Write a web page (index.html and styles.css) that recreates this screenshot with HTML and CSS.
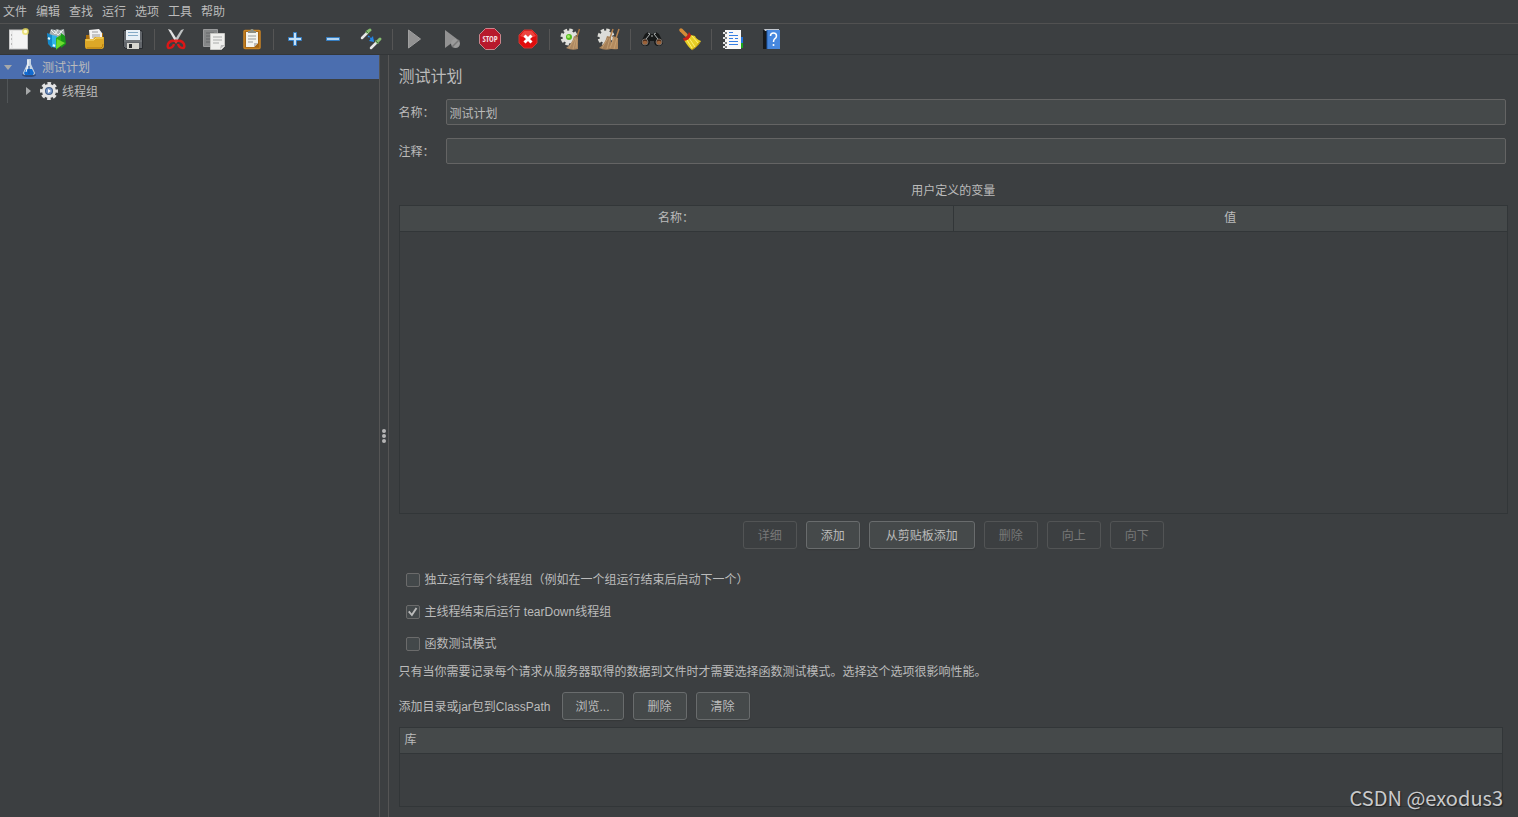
FILE: index.html
```html
<!DOCTYPE html>
<html lang="zh-CN">
<head>
<meta charset="utf-8">
<title>测试计划</title>
<link rel="stylesheet" href="styles.css">
</head>
<body>
<div class="app">
  <nav class="menubar" aria-label="主菜单">
    <button type="button">文件</button>
    <button type="button">编辑</button>
    <button type="button">查找</button>
    <button type="button">运行</button>
    <button type="button">选项</button>
    <button type="button">工具</button>
    <button type="button">帮助</button>
  </nav>

  <div class="toolbar" role="toolbar" aria-label="工具栏">
    <button type="button" aria-label="新建"><svg viewBox="0 0 24 24"><rect x="2.500" y="3" width="18" height="19" fill="#f4f4f4" stroke="#c9c9c9"/><path d="M5 3v19" stroke="#e2e2e2"/><path d="M4 8h1M4 12h1M4 17h1" stroke="#888"/><circle cx="18.500" cy="4.500" r="3.500" fill="#e9dc55" opacity=".75"/><circle cx="18.500" cy="4.500" r="1.700" fill="#fffbd8"/></svg></button>
    <button type="button" aria-label="模板"><svg viewBox="0 0 24 24"><path d="M4 8l2-6 4 1 2-1 3 1 4-1 1 8-8 4z" fill="#a9b1b3"/><path d="M6 3l4 4 3-4M9 3l4 5 5-5M15 4l3 4" stroke="#eef1f1" fill="none"/><path d="M2 6l5 2v13l-4-4z" fill="#1689c9"/><path d="M7 8l5 1v12l-5-1z" fill="#2fb4ea"/><path d="M3 11l2 1M8 18l2 1" stroke="#e5faff" stroke-width="2"/><path d="M11 11l5-3v11l-5 4z" fill="#2fae18"/><path d="M16 6l4 3 1 8-5 4z" fill="#189a18"/><path d="M12 12l8 4-9 6z" fill="#6ddb2e"/></svg></button>
    <button type="button" aria-label="打开"><svg viewBox="0 0 24 24"><path d="M3 8h3l1-2h13v15H3z" fill="#aa6e0c"/><path d="M6 3l10-1 3 4v8H7z" fill="#f3f3f3"/><path d="M9 5h6M9 8h8M9 10h8" stroke="#999"/><path d="M2 12h8l2-2h9v9q0 3-3 3H4q-2 0-2-3z" fill="#dda827"/><path d="M3 13h8l2-2h7" stroke="#f9db71" fill="none"/><path d="M4 21h14q2-1 2-4" stroke="#b47b0e" fill="none"/></svg></button>
    <button type="button" aria-label="保存"><svg viewBox="0 0 24 24"><path d="M2.500 3.500h18l1 2v16h-17l-2-2z" fill="#62666b" stroke="#292c30"/><rect x="5" y="3" width="14" height="10" fill="#e8f0f6"/><path d="M7 5.500h10M7 8.500h10" stroke="#86abc6"/><rect x="6" y="16" width="12" height="6" fill="#d6d6d0"/><rect x="8" y="17" width="3" height="4" fill="#292b2e"/><path d="M3 14h18" stroke="#7e8387"/></svg></button>
    <span class="separator"></span>
    <button type="button" aria-label="剪切"><svg viewBox="0 0 24 24"><path d="M4 2l3 1 7 11-2 2z" fill="#e3e3e3"/><path d="M20 2l-3 1-7 11 2 2z" fill="#bfc3c4"/><path d="M11 14q-5-1-7 3-1 4 1 4 4 0 5-4M13 14q5-1 7 3 1 4-1 4-4 0-5-4" fill="none" stroke="#db1717" stroke-width="2.400"/><path d="M10 14l2-2 2 2-2 3z" fill="#e22a24"/></svg></button>
    <button type="button" aria-label="复制"><svg viewBox="0 0 24 24"><path d="M1.500 2.500h14v17h-14z" fill="#858788" stroke="#9a9b9c"/><path d="M4 6h8M4 9h8M4 12h5M4 15h5" stroke="#656768"/><path d="M8.500 6.500h14v13l-3 3h-11z" fill="#efefed" stroke="#c7c7c4"/><path d="M11 10h9M11 13h9M11 16h6" stroke="#a9abaa"/><path d="M18 22l1-4h4z" fill="#bbb"/></svg></button>
    <button type="button" aria-label="粘贴"><svg viewBox="0 0 24 24"><rect x="4" y="3.500" width="16" height="18" rx="1" fill="#a66512" stroke="#c98424" stroke-width="1.500"/><path d="M6 5h12v11l-4 4H6z" fill="#f3f3ee"/><path d="M8 9h8M8 12h8M8 15h5" stroke="#999c9b"/><path d="M14 20v-4h4" fill="#bbb"/><path d="M8 6V4h2l1-2h2l1 2h2v2z" fill="#8b8e83"/></svg></button>
    <span class="separator"></span>
    <button type="button" aria-label="展开"><svg viewBox="0 0 24 24"><path d="M10.500 5.500h3v5h5v3h-5v5h-3v-5h-5v-3h5z" fill="#c5e0f7" stroke="#347dc1"/></svg></button>
    <button type="button" aria-label="折叠"><svg viewBox="0 0 24 24"><path d="M5.500 10.500h13v3h-13z" fill="#b3d5f3" stroke="#347dc1"/></svg></button>
    <button type="button" aria-label="切换"><svg viewBox="0 0 24 24"><path d="M3 11l6-6" stroke="#e8e8e8" stroke-width="2.500" stroke-linecap="round"/><path d="M8 5l3-2" stroke="#86bd70" stroke-width="3" stroke-linecap="round"/><path d="M7 4l3 3" stroke="#497a42"/><path d="M12 21l6-6" stroke="#e8e8e8" stroke-width="2.500" stroke-linecap="round"/><path d="M18 15l3-3" stroke="#86bd70" stroke-width="3" stroke-linecap="round"/><path d="M16 13l4 4" stroke="#497a42"/><path d="M9 9l5 4" stroke="#2686e8" stroke-width="1.500" stroke-dasharray="2 1"/><path d="M10 14l5 1-1-6z" fill="#2686e8"/></svg></button>
    <span class="separator"></span>
    <button type="button" aria-label="启动"><svg viewBox="0 0 24 24"><path d="M6.500 3v18l12-9z" fill="#929292" stroke="#a0a0a0"/></svg></button>
    <button type="button" aria-label="无停顿启动"><svg viewBox="0 0 24 24"><path d="M5 3v18l12-9z" fill="#929292"/><circle cx="15.500" cy="16.500" r="4.500" fill="#9b9b9b"/><path d="M12 20l7-7" stroke="#777" stroke-width="1.500"/></svg></button>
    <button type="button" aria-label="停止"><svg viewBox="0 0 24 24"><path d="M7.500 1.500h9l6 6v9l-6 6h-9l-6-6v-9z" fill="#b7192c" stroke="#c9868d"/><text class="stop-text" x="12" y="15" text-anchor="middle">STOP</text></svg></button>
    <button type="button" aria-label="关闭"><svg viewBox="0 0 24 24"><path d="M8 3h8l5 5v8l-5 5H8l-5-5V8z" fill="#e00d0d" stroke="#c93a34"/><path d="M4 9l4-5h8l4 5q-8 4-16 0" fill="#f87368" opacity=".55"/><path d="M8.500 8.500l7 7M15.500 8.500l-7 7" stroke="#fff" stroke-width="3"/></svg></button>
    <span class="separator"></span>
    <button type="button" aria-label="清除"><svg viewBox="0 0 24 24"><circle cx="10" cy="10" r="7" fill="none" stroke="#deded9" stroke-width="3" stroke-dasharray="3.500 2"/><circle cx="10" cy="10" r="6.500" fill="#e2e2de"/><circle cx="10" cy="10" r="3" fill="#55bb21"/><circle cx="9.500" cy="9.500" r="1.500" fill="#a5ef6a"/><path d="M20.500 2l-3 9" stroke="#a87542" stroke-width="1.500"/><path d="M15 9l4 1v12q-6 2-12-1 6-4 8-12z" fill="#ad8861"/><path d="M16 11l-6 10M17 11l-3 11M18 12l-1 9" stroke="#cba77a" stroke-width=".7"/></svg></button>
    <button type="button" aria-label="清除全部"><svg viewBox="0 0 24 24"><circle cx="9" cy="10" r="7" fill="none" stroke="#deded9" stroke-width="3" stroke-dasharray="3.500 2"/><circle cx="9" cy="10" r="6.500" fill="#dcdcd8"/><path d="M16 2l-3 9M22 2l-3 9" stroke="#b5824f" stroke-width="1.500"/><path d="M10 9l4 1v12q-6 2-12-1 6-4 8-12z" fill="#a68058"/><path d="M16 9l5 2v11q-5 1-10-1 4-4 5-12z" fill="#b28a5e"/><path d="M11 11L5 21M13 11l-3 11M17 11l-4 10M20 11l-3 11" stroke="#cba77a" stroke-width=".7"/></svg></button>
    <span class="separator"></span>
    <button type="button" aria-label="查找"><svg viewBox="0 0 24 24"><path d="M5 7l3-2 3 2h2l3-2 3 2 4 8q0 4-5 4-4 0-4-5h-4q0 5-4 5-5 0-5-4z" fill="#171919"/><path d="M8 6l2 1-4 5M16 6l-2 1 4 5M11 9h2" fill="none" stroke="#aeb2b2"/><circle cx="5" cy="15" r="3" fill="#9a6138" stroke="#6f6a66"/><circle cx="19" cy="15" r="3" fill="#9a6138" stroke="#6f6a66"/><path d="M3 14q2-2 4 0M17 14q2-2 4 0" fill="none" stroke="#382014"/></svg></button>
    <button type="button" aria-label="重置查找"><svg viewBox="0 0 24 24"><path d="M3 3l5 5" stroke="#d48b38" stroke-width="3.500" stroke-linecap="round"/><path d="M6 13l7-5 4 1q1 3 6 5-3 6-9 9-4-3-8-10z" fill="#e8ce24"/><path d="M9 13l5 8M11 11l6 9M14 9l6 7" stroke="#fff176"/><path d="M5 11q4 0 6-6l2 3q-1 5-7 6z" fill="#ca2018"/><path d="M14 23q5-3 8-8" fill="none" stroke="#ac8610"/></svg></button>
    <span class="separator"></span>
    <button type="button" aria-label="函数助手"><svg viewBox="0 0 24 24"><path d="M19 10h3v6h-3z" fill="#2174df"/><path d="M19 16h3v5h-3z" fill="#19a51c"/><rect x="4" y="3" width="16" height="19" fill="#f8f8f8"/><path d="M8 5.500h4M8 8.500h9M8 11.500h4M14 11.500h3M8 14.500h9M8 17.500h9" stroke="#347de2"/><path d="M2 6h4M2 11h4M2 16h4M2 20h4" stroke="#dfe0e0" stroke-width="2"/><path d="M5 5v2M5 10v2M5 15v2M5 19v2" stroke="#202224"/></svg></button>
    <button type="button" aria-label="帮助"><svg viewBox="0 0 24 24"><path d="M4 3h4v19H4z" fill="#17191b"/><path d="M5 2h15v2H6z" fill="#c3c8cf"/><path d="M8 3h13v19H8z" fill="#4788df"/><path d="M8 3v19" stroke="#205aaa"/><path d="M11.500 9q0-3 3-3t3 3q0 2-2 3-1 1-1 3" fill="none" stroke="#fff" stroke-width="1.500"/><circle cx="14.500" cy="18" r="1" fill="#fff"/></svg></button>
  </div>

  <div class="workspace">
    <aside class="tree">
      <div class="tree-row selected">
        <svg class="arrow" viewBox="0 0 12 12"><path d="M2 4h8L6 9z"/></svg>
        <svg class="node-icon" viewBox="0 0 20 20"><ellipse cx="10" cy="18" rx="7" ry="2" fill="#304b7e"/><path d="M8 2h4v5l4 9q0 2-2 2H6q-2 0-2-2l4-9z" fill="#c5d3e2"/><path d="M7 12h6l2 4-1 2H6l-1-2z" fill="#126bd0"/><path d="M9 3v5l-2 7" stroke="#fff" fill="none"/><path d="M10 9v8" stroke="#1c4f9e"/></svg>
        <span>测试计划</span>
      </div>
      <div class="tree-row child">
        <svg class="arrow" viewBox="0 0 12 12"><path d="M4 2v8l5-4z"/></svg>
        <svg class="node-icon" viewBox="0 0 20 20"><circle cx="10" cy="10" r="7.500" fill="none" stroke="#e2e2e2" stroke-width="3" stroke-dasharray="3.500 2.390" stroke-dashoffset="1.750"/><circle cx="10" cy="10" r="5.500" fill="#415d86" stroke="#e5e5e5" stroke-width="3"/><circle cx="10" cy="10" r="3" fill="#7695c4"/><path d="M9 8l3 2-3 2z" fill="#fff"/></svg>
        <span>线程组</span>
      </div>
    </aside>
    <div class="divider" role="separator" aria-orientation="vertical"><i></i><i></i><i></i></div>

    <main class="panel">
      <h1>测试计划</h1>
      <div class="field"><label for="name">名称：</label><input id="name" type="text" value="测试计划"></div>
      <div class="field"><label for="comment">注释：</label><input id="comment" type="text"></div>

      <h2>用户定义的变量</h2>
      <div class="table-area variables">
        <table><thead><tr><th scope="col">名称：</th><th scope="col">值</th></tr></thead></table>
      </div>
      <div class="actions">
        <button class="btn" type="button" disabled>详细</button>
        <button class="btn" type="button">添加</button>
        <button class="btn wide" type="button">从剪贴板添加</button>
        <button class="btn" type="button" disabled>删除</button>
        <button class="btn" type="button" disabled>向上</button>
        <button class="btn" type="button" disabled>向下</button>
      </div>

      <div class="options">
        <label><input type="checkbox">独立运行每个线程组（例如在一个组运行结束后启动下一个）</label>
        <label><input type="checkbox" checked>主线程结束后运行 tearDown线程组</label>
        <label><input type="checkbox">函数测试模式</label>
      </div>
      <p>只有当你需要记录每个请求从服务器取得的数据到文件时才需要选择函数测试模式。选择这个选项很影响性能。</p>

      <div class="classpath">
        <span>添加目录或jar包到ClassPath</span>
        <button class="btn" type="button">浏览...</button>
        <button class="btn" type="button">删除</button>
        <button class="btn" type="button">清除</button>
      </div>
      <div class="table-area library">
        <table><thead><tr><th scope="col">库</th></tr></thead></table>
      </div>
    </main>
  </div>
  <div class="watermark">CSDN @exodus3</div>
</div>
</body>
</html>
```
FILE: styles.css
```css
* { box-sizing: border-box; }

body {
  margin: 0;
  background: #3c3f41;
  color: #bbbbbb;
  font: 12px/16px "Liberation Sans", "Noto Sans CJK SC", sans-serif;
}

button, input { font: inherit; color: inherit; }

.app {
  position: relative;
  display: flex;
  flex-direction: column;
  min-height: 100vh;
}

.menubar {
  display: flex;
  gap: 9px;
  height: 24px;
  padding: 0 3px;
  border-bottom: 1px solid #515151;
}

.menubar button {
  padding: 0;
  border: 0;
  background: none;
}

.toolbar {
  display: flex;
  align-items: center;
  height: 31px;
  border-bottom: 1px solid #333638;
}

.toolbar button {
  display: flex;
  align-items: center;
  justify-content: center;
  width: 38px;
  height: 30px;
  padding: 0;
  border: 0;
  background: none;
}

.toolbar svg { width: 24px; height: 24px; }

.stop-text {
  font: bold 8px "Open Sans Condensed", "DejaVu Sans Condensed", "Liberation Sans Narrow", sans-serif;
  fill: #f5dfe1;
}

.separator {
  width: 1px;
  height: 21px;
  margin: 0 2px;
  background: #555555;
}

.workspace {
  display: flex;
  flex: 1;
}

.tree {
  flex: none;
  width: 25%;
  border-right: 1px solid #555555;
}

.tree-row {
  display: flex;
  align-items: center;
  height: 24px;
  padding-left: 2px;
}

.selected { background: #4b6eaf; }

.child {
  margin-left: 7px;
  padding-left: 14px;
  border-left: 1px solid #515557;
}

.arrow {
  width: 12px;
  height: 12px;
  margin-right: 5px;
  fill: #a7a9aa;
}

.node-icon {
  width: 20px;
  height: 20px;
  margin-right: 3px;
}

.tree-row span,
.field label,
.classpath span { padding-top: 2px; }

.divider {
  display: flex;
  flex: none;
  flex-direction: column;
  align-items: center;
  justify-content: center;
  gap: 1px;
  width: 9px;
  border-right: 1px solid #555555;
}

.divider i {
  width: 4px;
  height: 4px;
  border-radius: 2px;
  background: #b5b5b5;
}

.panel {
  display: flex;
  flex: 1;
  flex-direction: column;
  min-width: 0;
  padding: 9px 10px 10px;
}

h1 {
  margin: 0 0 9px;
  font-size: 16px;
  font-weight: 400;
  line-height: 26px;
}

.field {
  display: flex;
  align-items: center;
  margin: 0 2px 13px 0;
}

.field label { width: 47px; }

.field input {
  flex: 1;
  min-width: 0;
  height: 26px;
  padding: 0 3px;
  border: 1px solid #646464;
  border-radius: 2px;
  background: #45494a;
}

h2 {
  margin: 6px 0 6px;
  font-size: 12px;
  font-weight: 400;
  line-height: 16px;
  text-align: center;
}

.table-area { border: 1px solid #323638; }

.variables {
  flex: 1;
  min-height: 120px;
}

table {
  width: 100%;
  border-collapse: collapse;
  table-layout: fixed;
}

th {
  height: 25px;
  padding: 0 5px;
  border-bottom: 1px solid #323638;
  background: #45494a;
  font-weight: 400;
}

th + th { border-left: 1px solid #323638; }

.actions {
  display: flex;
  justify-content: center;
  gap: 9px;
  margin: 7px 0 15px;
}

.btn {
  min-width: 54px;
  height: 28px;
  padding: 1px 13px 0;
  border: 1px solid #696c6d;
  border-radius: 3px;
  background: #45494a;
  box-shadow: 0 1px 1px #353839;
  white-space: nowrap;
}

.wide { padding: 1px 16px 0; }

.btn:disabled {
  border-color: #525455;
  background: none;
  box-shadow: none;
  color: #777777;
}

.options { padding-left: 7px; }

.options label {
  display: flex;
  align-items: center;
  gap: 5px;
  height: 32px;
}

.options input {
  display: grid;
  place-content: center;
  appearance: none;
  width: 14px;
  height: 14px;
  margin: 0;
  border: 1px solid #6b6b6b;
  border-radius: 2px;
  background: #43484a;
}

.options input:checked::before {
  content: "";
  width: 10px;
  height: 10px;
  background: #bbbbbb;
  clip-path: polygon(5% 50%, 20% 38%, 42% 65%, 82% 5%, 98% 15%, 45% 95%);
}

p {
  margin: 4px 0 12px;
}

.classpath {
  display: flex;
  align-items: center;
  gap: 9px;
  margin-bottom: 7px;
}

.classpath span { margin-right: 2px; }

.library {
  width: calc(100% - 5px);
  height: 80px;
}

.library th { text-align: left; }

.watermark {
  position: absolute;
  right: 15px;
  bottom: 5px;
  font: 20px/28px "Noto Sans CJK SC", sans-serif;
  color: #c9cacb;
  text-shadow: 1px 1px 1px #202224;
}
```
